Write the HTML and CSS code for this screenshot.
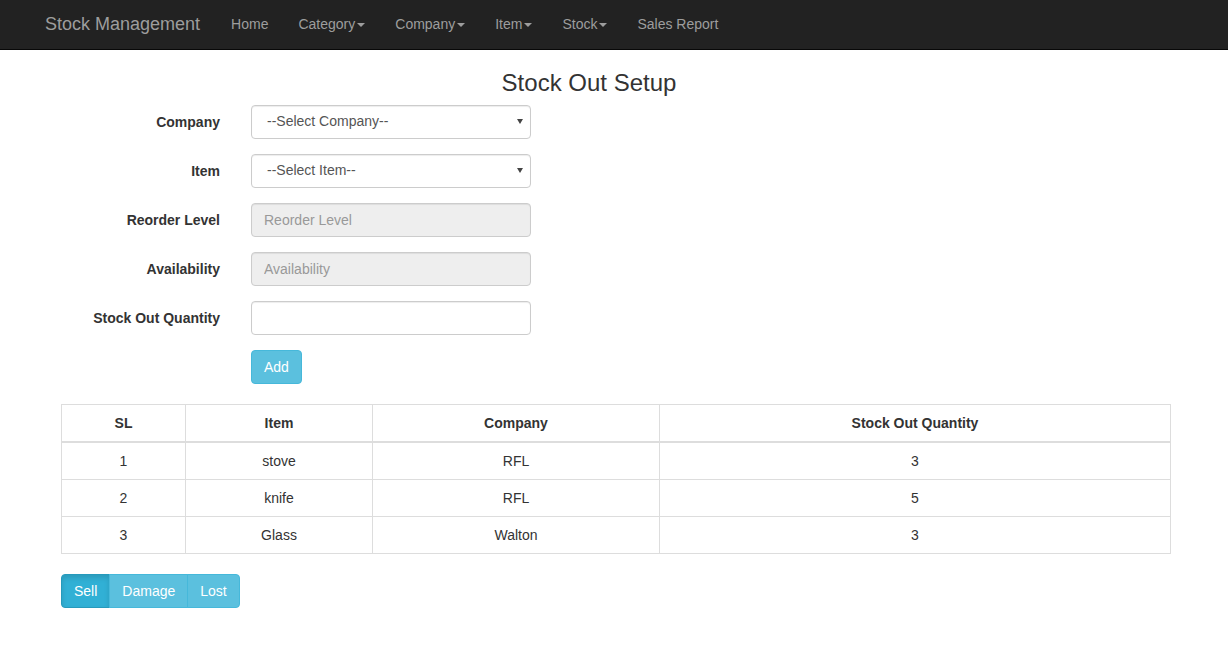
FILE: index.html
```html
<!DOCTYPE html>
<html>
<head>
<meta charset="utf-8">
<title>Stock Out Setup</title>
<link rel="stylesheet" href="styles.css">
</head>
<body>
<nav class="navbar">
  <div class="nav-container">
    <a class="brand" href="#">Stock Management</a>
    <ul class="nav">
      <li><a href="#">Home</a></li>
      <li><a href="#">Category<span class="caret"></span></a></li>
      <li><a href="#">Company<span class="caret"></span></a></li>
      <li><a href="#">Item<span class="caret"></span></a></li>
      <li><a href="#">Stock<span class="caret"></span></a></li>
      <li><a href="#">Sales Report</a></li>
    </ul>
  </div>
</nav>
<main class="main">
  <h3 class="title">Stock Out Setup</h3>
  <form class="form">
    <label class="label">Company</label>
    <div class="select-wrap">
      <select class="control select"><option>--Select Company--</option></select>
    </div>
    <label class="label">Item</label>
    <div class="select-wrap">
      <select class="control select"><option>--Select Item--</option></select>
    </div>
    <label class="label">Reorder Level</label>
    <input class="control" placeholder="Reorder Level" disabled>
    <label class="label">Availability</label>
    <input class="control" placeholder="Availability" disabled>
    <label class="label">Stock Out Quantity</label>
    <input class="control">
    <span></span>
    <div><button type="button" class="btn btn-info">Add</button></div>
  </form>
  <table class="table">
    <thead>
      <tr><th class="c1">SL</th><th class="c2">Item</th><th class="c3">Company</th><th>Stock Out Quantity</th></tr>
    </thead>
    <tbody>
      <tr><td>1</td><td>stove</td><td>RFL</td><td>3</td></tr>
      <tr><td>2</td><td>knife</td><td>RFL</td><td>5</td></tr>
      <tr><td>3</td><td>Glass</td><td>Walton</td><td>3</td></tr>
    </tbody>
  </table>
  <div class="btn-group">
    <button type="button" class="btn btn-info active">Sell</button>
    <button type="button" class="btn btn-info">Damage</button>
    <button type="button" class="btn btn-info">Lost</button>
  </div>
</main>
</body>
</html>
```
FILE: styles.css
```css
* { box-sizing: border-box; }
html, body { margin: 0; padding: 0; }
body {
  font-family: "Liberation Sans", Arial, Helvetica, sans-serif;
  font-size: 14px;
  line-height: 1.42857;
  color: #333;
  background: #fff;
}
a { text-decoration: none; }

.navbar {
  background: #222;
  border-bottom: 1px solid #080808;
  height: 50px;
}
.nav-container {
  width: 1170px;
  margin: 0 auto;
  padding: 0 15px;
  display: flex;
  align-items: flex-start;
}
.brand {
  margin-left: -14px;
  padding: 14px 16px 16px 15px;
  font-size: 18px;
  line-height: 20px;
  height: 50px;
  color: #9d9d9d;
}
.nav {
  list-style: none;
  margin: 0;
  padding: 0;
  display: flex;
}
.nav a {
  display: block;
  padding: 14px 15px 16px;
  line-height: 20px;
  color: #9d9d9d;
}
.caret {
  display: inline-block;
  width: 0;
  height: 0;
  margin-left: 2px;
  vertical-align: middle;
  border-top: 4px dashed;
  border-right: 4px solid transparent;
  border-left: 4px solid transparent;
}

.main {
  width: 1110px;
  margin-left: 61px;
}
.title {
  font-size: 24px;
  font-weight: 500;
  line-height: 1.1;
  margin: 20px 0 9px;
  padding-right: 54px;
  text-align: center;
}
.form {
  display: grid;
  grid-template-columns: 159px 280px;
  column-gap: 31px;
  row-gap: 15px;
  margin-bottom: 20px;
}
.label {
  font-weight: bold;
  text-align: right;
  padding-top: 8px;
}
.control {
  display: block;
  width: 280px;
  height: 34px;
  padding: 6px 12px;
  font-family: inherit;
  font-size: 14px;
  line-height: 1.42857;
  color: #555;
  background: #fff;
  border: 1px solid #ccc;
  border-radius: 4px;
  box-shadow: inset 0 1px 1px rgba(0,0,0,.075);
}
.control::placeholder { color: #999; }
.control:disabled { background: #eee; }
.select-wrap { position: relative; width: 280px; }
.select {
  appearance: none;
  -webkit-appearance: none;
  padding-left: 15px;
}
.select-wrap::after {
  content: "";
  position: absolute;
  right: 8px;
  top: 14px;
  border-top: 5px solid #444;
  border-left: 3px solid transparent;
  border-right: 3px solid transparent;
  pointer-events: none;
}

.btn {
  display: inline-block;
  height: 34px;
  padding: 7px 12px 5px;
  font-family: inherit;
  font-size: 14px;
  line-height: 1.42857;
  border: 1px solid transparent;
  border-radius: 4px;
  cursor: pointer;
}
.btn-info {
  color: #fff;
  background: #5bc0de;
  border-color: #46b8da;
}
.btn-info.active {
  background: #31b0d5;
  border-color: #269abc;
  box-shadow: inset 0 3px 5px rgba(0,0,0,.125);
}

.table {
  width: 1110px;
  border-collapse: collapse;
  border: 1px solid #ddd;
  margin-bottom: 20px;
}
.table th, .table td {
  padding: 8px;
  line-height: 20px;
  border: 1px solid #ddd;
  text-align: center;
}
.table thead th { border-bottom: 2px solid #ddd; }
.c1 { width: 124px; }
.c2 { width: 187px; }
.c3 { width: 287px; }

.btn-group { display: flex; }
.btn-group .btn { border-radius: 0; margin-left: -1px; }
.btn-group .btn:first-child { margin-left: 0; border-radius: 4px 0 0 4px; }
.btn-group .btn:last-child { border-radius: 0 4px 4px 0; }
```
